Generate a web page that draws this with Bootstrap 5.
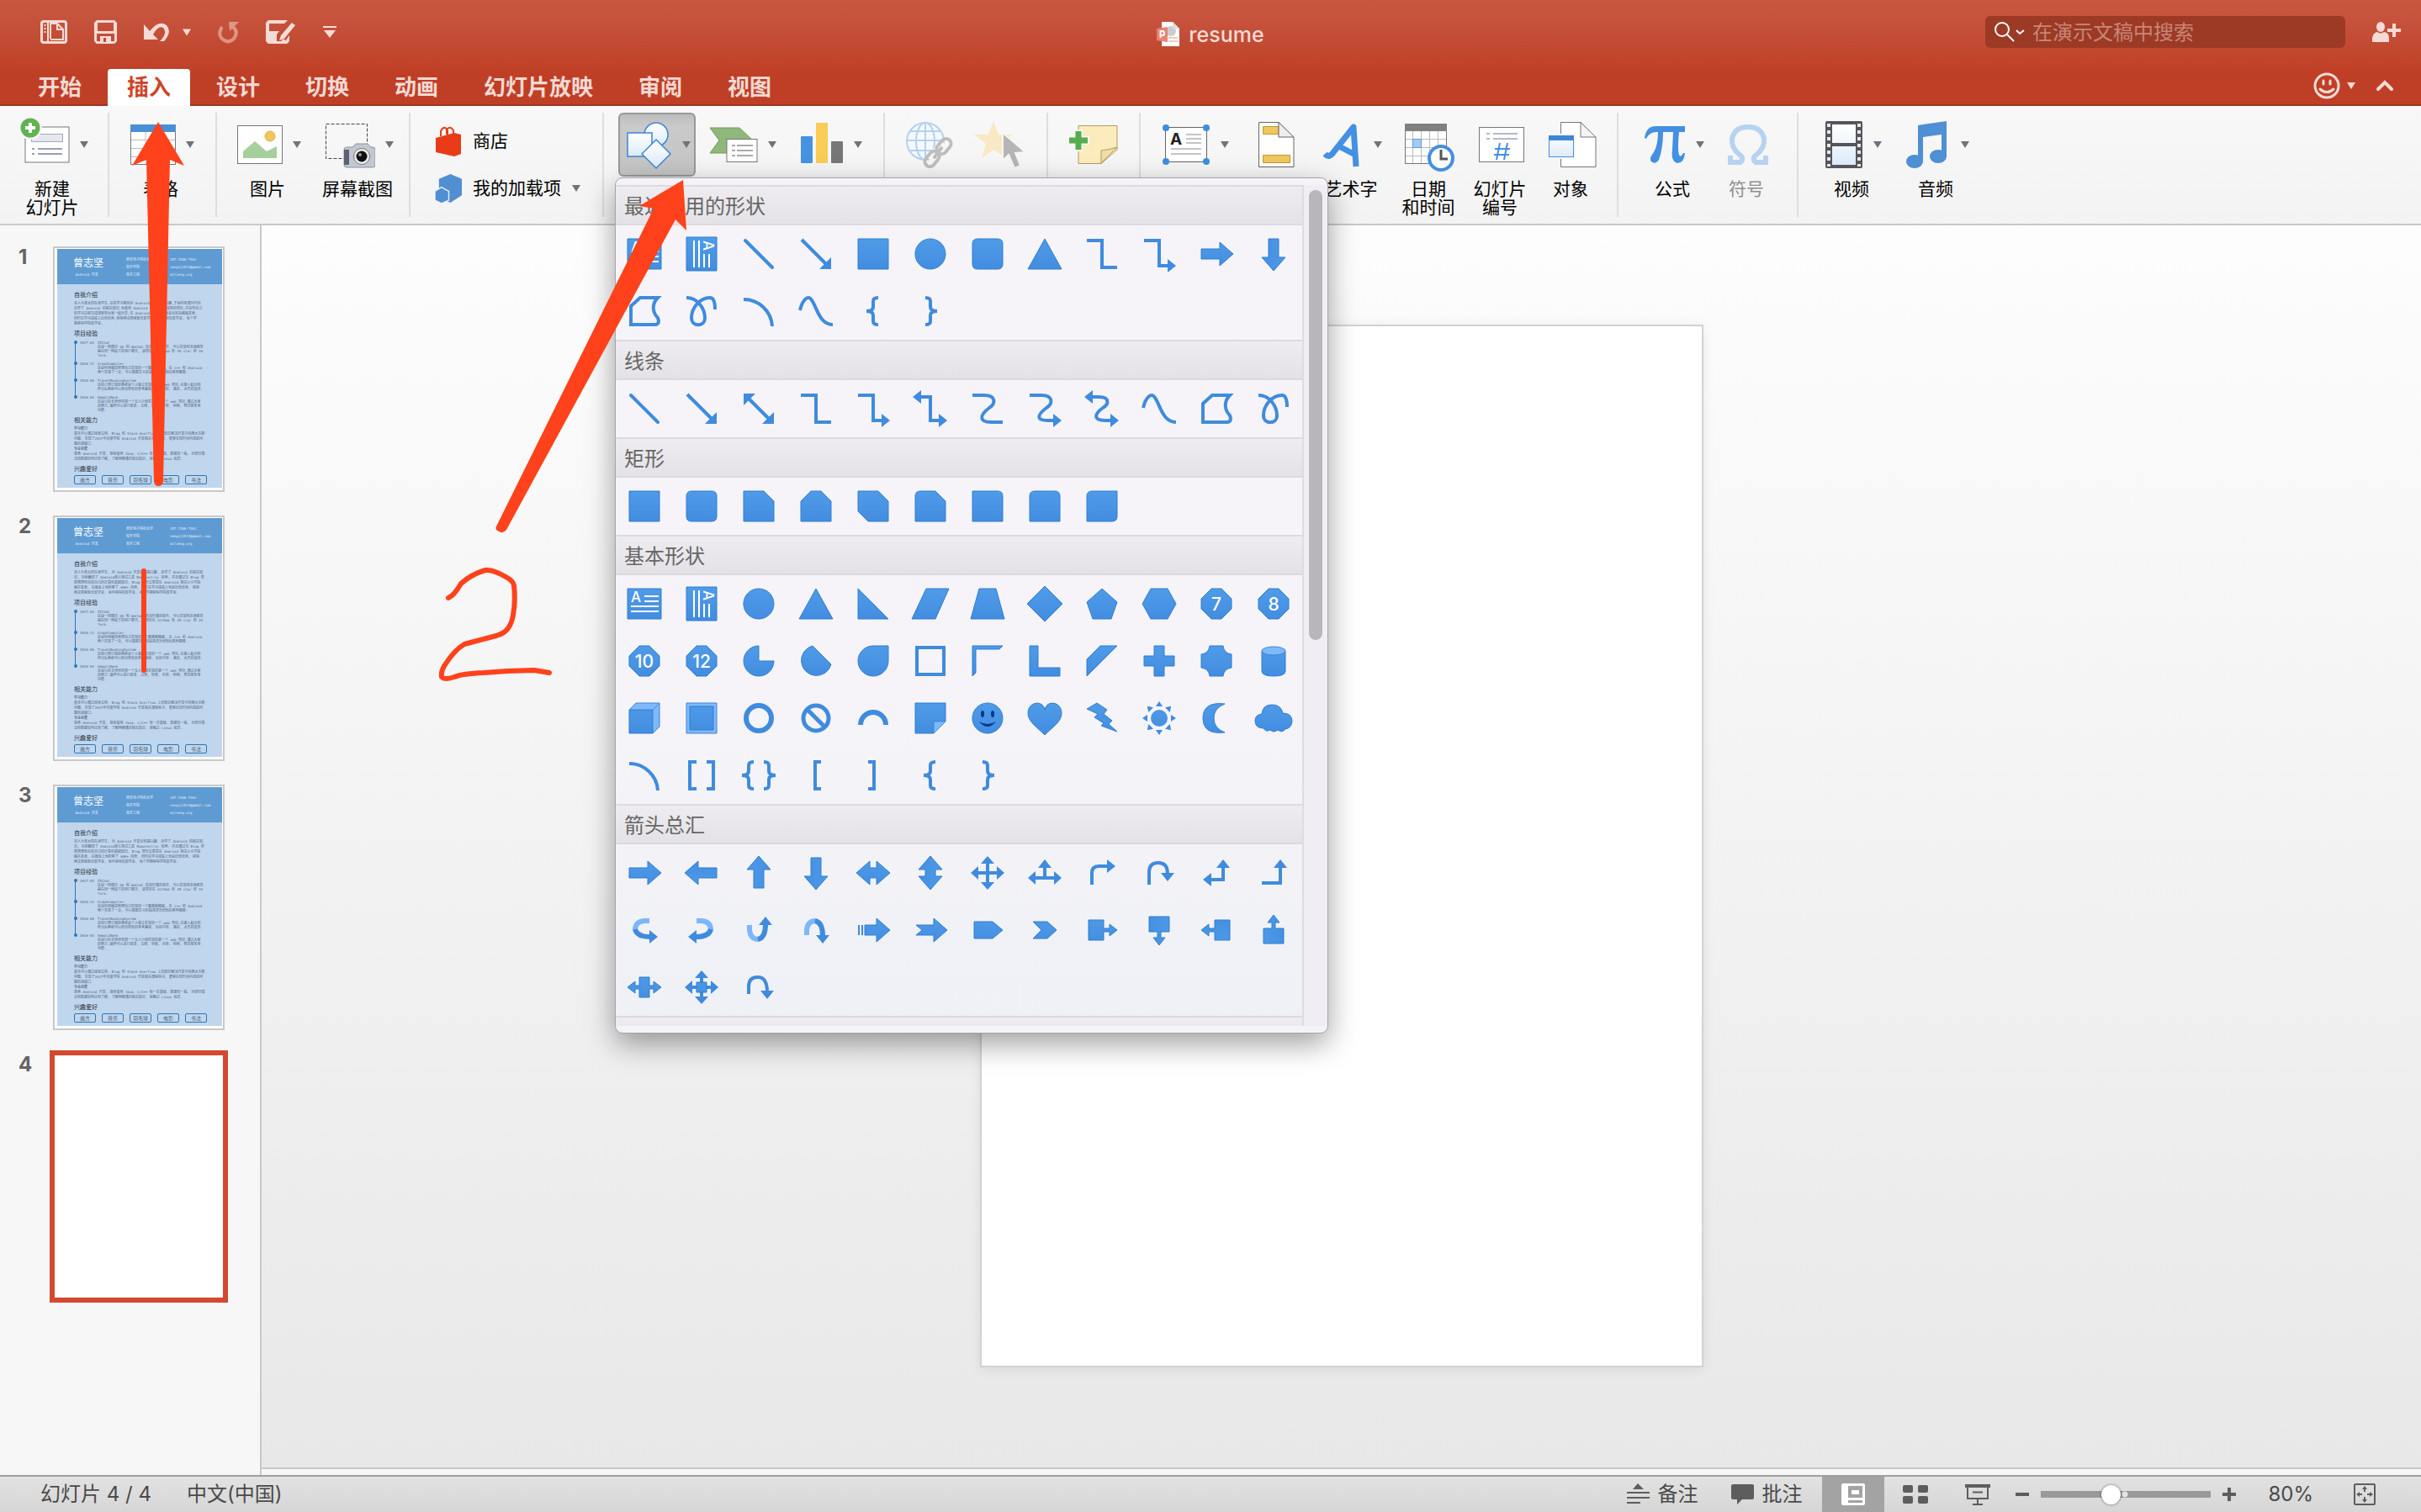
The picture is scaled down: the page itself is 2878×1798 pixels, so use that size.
<!DOCTYPE html>
<html lang="zh-CN">
<head>
<meta charset="utf-8">
<meta name="viewport" content="width=device-width, initial-scale=1">
<title>resume</title>
<link href="https://cdn.jsdelivr.net/npm/bootstrap@5.3.0/dist/css/bootstrap.min.css" rel="stylesheet">
<style>
  body { font-family: Inter, "Noto Sans CJK SC", sans-serif; font-size: 24px; line-height: 1.25; color: #4a4a4a; background: #f7f7f7; }
  svg { display: block; flex: none; }
  button { color: inherit; }
  .plain { background: none; border: 0; padding: 0; }

  /* title bar and tabs */
  .app-head { background: linear-gradient(#c8563d 0, #c5513a 30px, #bf3f26 88px, #bf3f26 100%); box-shadow: inset 0 -2px #9c3521; color: #f5dbd5; }
  .title-row { display: grid; grid-template-columns: 1fr auto 1fr; height: 76px; padding: 0 24px; }
  .doc-title { font-size: 25px; font-weight: 500; line-height: 30px; gap: 10px; padding-top: 6px; }
  .quick { gap: 32px; padding-left: 24px; }
  .search-box { width: 428px; height: 38px; border-radius: 6px; background: #9c3a26; padding-left: 10px; gap: 8px; }
  .search-box input { background: none; border: 0; outline: 0; color: #fff; font-size: 24px; line-height: 30px; padding: 2px 0 0; width: 360px; }
  .search-box input::placeholder { color: #ca8577; opacity: 1; }
  .tab-row { height: 50px; padding: 6px 32px 0 22px; }
  .tab-row .nav { gap: 8px; }
  .tab-link { font-size: 26px; font-weight: 700; line-height: 44px; height: 44px; padding: 0 23px; color: #f3d9d2; text-decoration: none; border-radius: 4px 4px 0 0; }
  .tab-link.active { background: #fff; color: #cf4327; }

  /* ribbon */
  .ribbon { height: 142px; padding-top: 8px; background: linear-gradient(#f8f8f8, #f3f3f3); border-bottom: 2px solid #c9c9c9; }
  .tool-group { height: 124px; gap: 4px; border-right: 2px solid #dedede; }
  .tool-group.last { border: 0; padding-left: 19px; }
  .w-a { width: 130px; } .w-b { width: 128px; } .w-c { width: 230px; padding-left: 6px; } .w-d { width: 230px; padding: 16px 0 16px 29px; } .w-e { width: 334px; padding-left: 17px; }
  .w-f { width: 194px; } .w-g { width: 110px; } .w-h { width: 568px; padding-left: 13px; gap: 3px; } .w-i { width: 214px; padding-right: 4px; }
  .tool { display: flex; flex-direction: column; align-items: center; justify-content: flex-start; font-size: 21px; line-height: 22px; color: #000; padding: 0 12px; min-width: 72px; }
  .tool-face { display: flex; align-items: center; justify-content: center; gap: 12px; height: 76px; margin-bottom: 4px; }
  .tool span { display: block; white-space: nowrap; margin: 0 -8px 0 -12px; }
  .tool.off span { color: #8e8e8e; }
  .tool.pressed { padding: 0; }
  .tool.pressed .tool-face { width: 92px; padding: 0 2px 0 5px; background: linear-gradient(#bdbdbd, #cacaca 20%, #c4c4c4); border: 2px solid #989898; border-radius: 6px; }
  .header-tool { min-width: 82px; }
  .side-tool { font-size: 21px; line-height: 32px; color: #000; gap: 13px; }

  /* shape gallery */
  .gallery { position: absolute; left: -4px; top: 77px; width: 848px; z-index: 5; padding: 8px 0 8px; background: #f5f3f7; border: 1px solid #a4a4a8; border-radius: 9px; box-shadow: 0 12px 34px rgba(0,0,0,.38); }
  .gallery-list { width: 816px; height: 1000px; overflow: hidden; background: linear-gradient(#f6f4f8, #f6f4f8 60%, #eff1f6); }
  .gallery-bar { width: 30px; border-left: 2px solid #dddce0; background: #f0eef4; padding: 6px 0 0 6px; }
  .gallery-thumb { width: 16px; height: 535px; border-radius: 8px; background: #b8b6ba; }
  .shape-head { font-size: 24px; font-weight: 400; line-height: 47px; height: 48px; margin: 0; padding-left: 10px; color: #666; border: solid #dcdade; border-width: 2px 0; background: linear-gradient(#eeecf0, #e4e2e6); }
  .shape-grid { display: grid; grid-template-columns: repeat(12, 68px); }
  .shape-grid button { height: 68px; }
  .num { font: 500 21px Inter, sans-serif; fill: #fff; text-anchor: middle; }

  /* slide panel */
  .panel { width: 311px; flex: none; border-right: 2px solid #c9c9c9; background: #f7f7f7; padding-top: 25px; }
  .slide-item { height: 292px; margin-bottom: 28px; }
  .slide-no { width: 63px; padding-left: 22px; font-size: 24px; font-weight: 700; line-height: 26px; color: #646464; }
  .thumb { width: 204px; height: 292px; border: 2px solid #c8c8c8; background: #fff; padding: 1px 1px 4px 3px; }
  .thumb.current { border-color: #d2492f; outline: 4px solid #d2492f; }
  .cv { width: 196px; height: 284px; background: #bfd6ed; color: #52637a; font: 4px/6px "DejaVu Sans Mono", "Noto Sans CJK SC", monospace; }
  .cv-head { height: 42px; background: #5f9bd3; color: #e4eef8; padding: 8px 0 0 19px; display: grid; grid-template-columns: 63px 52px 1fr; line-height: 9px; white-space: pre; }
  .cv-name { font-size: 12px; line-height: 18px; color: #fff; }
  .cv-main { padding: 8px 18px 0 20px; white-space: pre; }
  .cv-h { font-size: 7px; line-height: 10px; font-weight: 400; color: #27303b; margin-bottom: 2px; }
  .cv-main > p { margin: 0 0 4px; }
  .cv-sub { color: #303c4b; }
  .cv-time { position: relative; margin: 3px 0 4px; line-height: 5px; }
  .cv-time::before { content: ""; position: absolute; left: 1px; top: 2px; height: 66px; width: 1px; background: #2e75b6; }
  .cv-row { display: grid; grid-template-columns: 7px 21px 1fr; margin-bottom: 5px; }
  .cv-row::before { content: ""; width: 4px; height: 4px; border-radius: 50%; background: #2e75b6; }
  .cv-tag { border: 1px solid #2e75b6; border-radius: 2px; width: 26px; height: 11px; font-size: 6px; line-height: 9px; text-align: center; }

  /* canvas */
  .stage { background: linear-gradient(#fdfdfd, #e8e8e8); border-bottom: 2px solid #cacaca; margin-bottom: 7px; }
  .page-sheet { width: 860px; height: 1240px; margin-bottom: 2px; background: #fff; border: 2px solid #d2d2d2; box-shadow: 0 2px 14px rgba(0,0,0,.08); }

  /* status bar */
  .status { height: 44px; border-top: 2px solid #9f9f9f; background: linear-gradient(#e2e2e2, #d6d6d6); line-height: 44px; padding: 0 54px 0 48px; }
  .status-info { gap: 42px; }
  .status-notes { gap: 40px; }
  .status-btn { gap: 9px; }
  .view-btn { width: 74px; height: 42px; }
  .view-btn.active { background: #a3a3a3; }
  .zoom-label { margin: 0 48px 0 38px; }
  .zoom-range { -webkit-appearance: none; appearance: none; width: 202px; height: 24px; background: radial-gradient(circle at 100px 12px, #e4e4e4 3px, transparent 4px), linear-gradient(#999, #999) 0 8px / 100% 8px no-repeat; border-radius: 4px; margin: 0 14px; }
  .zoom-range::-webkit-slider-thumb { -webkit-appearance: none; width: 23px; height: 23px; border-radius: 50%; background: #fff; box-shadow: 0 0 3px rgba(0,0,0,.55); }

  .ink { position: absolute; left: 0; top: 0; z-index: 10; pointer-events: none; }
</style>
<script src="https://cdn.jsdelivr.net/npm/bootstrap@5.3.0/dist/js/bootstrap.bundle.min.js"></script>
</head>
<body class="d-flex flex-column vh-100 overflow-hidden position-relative">

<svg width="0" height="0" class="position-absolute" aria-hidden="true">
  <defs>
    <linearGradient id="gb" gradientUnits="userSpaceOnUse" x1="0" y1="14" x2="0" y2="54"><stop offset="0" stop-color="#509ce8"/><stop offset="1" stop-color="#428ce0"/></linearGradient>
    <linearGradient id="gw" x1="0" y1="0" x2="0" y2="1"><stop offset="0" stop-color="#fff"/><stop offset="1" stop-color="#dcebf9"/></linearGradient>
    <symbol id="caret" viewBox="0 0 10 8"><path d="M0 0H10L5 8Z" fill="currentColor"/></symbol>
  </defs>
</svg>

<header class="app-head">
  <div class="title-row align-items-center">
    <div class="quick d-flex align-items-center">
      <button class="plain" aria-label="模板"><svg width="32" height="28" viewBox="0 0 32 28"><path fill="none" stroke="currentColor" stroke-width="3" d="M4 1.500H28Q30.500 1.500 30.500 4V24Q30.500 26.500 28 26.500H4Q1.500 26.500 1.500 24V4Q1.500 1.500 4 1.500Z"/><path fill="none" stroke="currentColor" stroke-width="2" d="M9 2V26M12 22V4H20L27 11V23H12M20 4V11H27"/><path stroke="currentColor" stroke-width="2" stroke-dasharray="2 2" d="M5.500 5V15"/></svg></button>
      <button class="plain" aria-label="保存"><svg width="27" height="28" viewBox="0 0 27 28"><path fill="currentColor" fill-rule="evenodd" d="M3 0H24L27 3V25L24 28H3L0 25V3ZM4 3V13H23V3ZM3 16V25H7V19H20V25H24V16ZM11 21V26H14V21Z"/></svg></button>
      <div class="d-flex align-items-center gap-3">
        <button class="plain" aria-label="撤消"><svg width="30" height="26" viewBox="0 0 30 26"><path fill="currentColor" d="M0 4V22H17L11 16Q17 5 23 8Q29 14 19 24H24Q34 13 27 5Q18-2 7 12Z"/></svg></button>
        <svg width="10" height="9"><use href="#caret"/></svg>
      </div>
      <button class="plain opacity-50" aria-label="重复"><svg width="25" height="28" viewBox="0 0 25 28"><path fill="none" stroke="currentColor" stroke-width="4" d="M5 8Q0 15 4 21Q11 29 19 22Q25 14 18 8"/><path fill="currentColor" d="M13 2H25L14 13Z"/></svg></button>
      <button class="plain" aria-label="另存为"><svg width="36" height="28" viewBox="0 0 36 28"><path fill="currentColor" fill-rule="evenodd" d="M3 0H26L22 4H4V13H16L13 17V25H18L20 23H23V25L28 18V25L25 28H3L0 25V3Z"/><path fill="currentColor" d="M31 3L35 6L22 22L16 24L18 18Z"/></svg></button>
      <button class="plain" aria-label="自定义"><svg width="16" height="16" viewBox="0 0 16 16"><path fill="currentColor" d="M0 1H16V3H0ZM1 6H15L8 15Z"/></svg></button>
    </div>
    <div class="doc-title d-flex align-items-center">
      <svg width="28" height="30" viewBox="0 0 28 30"><path fill="#fff" d="M6 0H19L27 8V29H6Z"/><circle cx="17" cy="11" r="6" fill="#ccc"/><path fill="#dcdcdc" d="M19 0V8H27Z"/><path stroke="#f0cdb8" stroke-width="2" d="M14 19H25M14 23H25"/><path fill="#e88272" d="M0 8L13 6V24L0 22Z"/><path d="M4.500 19V11H7Q9 11 9 13.500T7 16H5" fill="none" stroke="#fff" stroke-width="2"/></svg>
      <span>resume</span>
    </div>
    <div class="d-flex align-items-center justify-content-end gap-4">
      <label class="search-box d-flex align-items-center me-2">
        <svg width="38" height="26" viewBox="0 0 38 26" fill="none" stroke="#fff" stroke-width="2"><circle cx="10" cy="10" r="8"/><path d="M16 16L24 24M27 11L31 15L36 11"/></svg>
        <input type="text" placeholder="在演示文稿中搜索" aria-label="在演示文稿中搜索">
      </label>
      <button class="plain" aria-label="共享"><svg width="34" height="26" viewBox="0 0 34 26" fill="currentColor"><ellipse cx="10" cy="7" rx="5" ry="6"/><path d="M0 25V20Q1 14 6 13Q10 16 14 13Q20 14 20 20V25ZM18 9H24V3H28V9H34V13H28V19H24V13H18Z"/></svg></button>
    </div>
  </div>
  <div class="tab-row d-flex justify-content-between">
    <nav class="nav">
      <a class="tab-link" href="#">开始</a><a class="tab-link active" href="#" aria-current="page">插入</a><a class="tab-link" href="#">设计</a><a class="tab-link" href="#">切换</a><a class="tab-link" href="#">动画</a><a class="tab-link" href="#">幻灯片放映</a><a class="tab-link" href="#">审阅</a><a class="tab-link" href="#">视图</a>
    </nav>
    <div class="d-flex align-items-center gap-2 pb-1">
      <button class="plain" aria-label="反馈"><svg width="32" height="32" viewBox="0 0 32 32" fill="none" stroke="currentColor" stroke-width="3"><circle cx="16" cy="16" r="14"/><path stroke-linecap="round" d="M12 10V14M20 10V14M8 20Q16 27 24 20"/></svg></button>
      <svg width="10" height="8"><use href="#caret"/></svg>
      <button class="plain ms-3" aria-label="折叠功能区"><svg width="22" height="14" viewBox="0 0 22 14" fill="none" stroke="currentColor" stroke-width="4" stroke-linecap="round"><path d="M3 11L11 3L19 11"/></svg></button>
    </div>
  </div>
</header>

<section class="ribbon d-flex text-secondary position-relative z-1" aria-label="插入">
  <div class="tool-group w-a d-flex justify-content-center">
    <button class="plain tool"><div class="tool-face"><svg width="60" height="76" viewBox="21 134 60 76"><rect x="28" y="151" width="52" height="42" fill="#fff" stroke="#777"/><rect x="35.500" y="159.500" width="37" height="9" fill="#e6e8f0" stroke="#a5a9bb"/><path stroke="#9a9eb8" stroke-width="2" d="M36 177H39M43 177H72M36 183H39M43 183H72"/><circle cx="34" cy="152" r="14" fill="#f7f7f7"/><circle cx="34" cy="152" r="11.500" fill="#62b152"/><path stroke="#fff" stroke-width="4" d="M34 146V158M28 152H40"/></svg><svg class="text-secondary" width="10" height="8"><use href="#caret"/></svg></div><span>新建<br>幻灯片</span></button>
  </div>
  <div class="tool-group w-b d-flex justify-content-center">
    <button class="plain tool"><div class="tool-face"><svg width="54" height="76" viewBox="157 134 54 76"><rect x="157.500" y="148.500" width="53" height="47" fill="#fff" stroke="#777"/><path stroke="#bbb" d="M158 166.500H210M158 176.500H210M158 186.500H210M175 157V195M193 157V195"/><path fill="#4a8fd6" d="M157 148H211V157H157Z"/></svg><svg class="text-secondary" width="10" height="8"><use href="#caret"/></svg></div><span>表格</span></button>
  </div>
  <div class="tool-group w-c d-flex justify-content-center">
    <button class="plain tool"><div class="tool-face"><svg width="54" height="76" viewBox="285 134 54 76"><rect x="285.500" y="149.500" width="53" height="45" fill="#fff" stroke="#777"/><circle cx="324" cy="162" r="6" fill="#f0c75a" stroke="#dcae3a"/><path fill="#a6cf9d" d="M292 188V180L306 168L320 180L332 174V188Z"/></svg><svg class="text-secondary" width="10" height="8"><use href="#caret"/></svg></div><span>图片</span></button>
    <button class="plain tool"><div class="tool-face"><svg width="60" height="76" viewBox="384 134 60 76"><rect x="385.500" y="147.500" width="49" height="41" fill="none" stroke="#444" stroke-dasharray="4 2"/><path fill="#c3c7d1" stroke="#8c92a1" d="M410 175H417L421 171H435L439 175H441Q444 175 444 178V196Q444 199 441 199H410Q407 199 407 196V178Q407 175 410 175Z"/><path fill="#5d6270" d="M407 178H413V196H407Z"/><circle cx="428" cy="186" r="9.500" fill="#eee" stroke="#777"/><circle cx="428" cy="186" r="6.500" fill="#111"/><circle cx="426" cy="184" r="2" fill="#999"/></svg><svg class="text-secondary" width="10" height="8"><use href="#caret"/></svg></div><span>屏幕截图</span></button>
  </div>
  <div class="tool-group w-d d-flex flex-column align-items-start justify-content-between">
    <button class="plain side-tool d-flex align-items-center"><svg width="32" height="36" viewBox="518 148 32 36"><path fill="none" stroke="#e83c1b" stroke-width="2" d="M525 160V154Q529 146 533 153V159M532 158V152Q536 147 540 153V158"/><path fill="#ea3b19" d="M519 162L541 156L549 158V181L541 184L519 179Z"/></svg>商店</button>
    <button class="plain side-tool d-flex align-items-center"><svg width="32" height="36" viewBox="517 208 33 37"><path fill="#4f8fd2" d="M522 215L536 209L550 215V235L536 244L522 238Z"/><path fill="#4f8fd2" stroke="#e8f0f8" stroke-width="1.500" d="M517 230L525 225L534 230V241L525 245L517 241Z"/></svg>我的加载项<svg class="text-secondary" width="10" height="8"><use href="#caret"/></svg></button>
  </div>
  <div class="tool-group w-e d-flex">
    <div class="position-relative">
      <button class="plain tool pressed" aria-label="形状" aria-expanded="true"><div class="tool-face"><svg width="54" height="76" viewBox="746 134 54 76" fill="url(#gw)" stroke="#3a86d6" stroke-width="1.500"><circle cx="781" cy="160" r="14"/><rect x="747" y="158" width="29" height="28"/><path d="M781 166L798 183L781 200L764 183Z"/></svg><svg class="text-secondary" width="10" height="8"><use href="#caret"/></svg></div></button>
      <div class="gallery d-flex" role="menu" aria-label="形状库">
        <div class="gallery-list" id="galleryList"></div>
        <div class="gallery-bar"><div class="gallery-thumb"></div></div>
      </div>
    </div>
    <button class="plain tool" aria-label="SmartArt"><div class="tool-face"><svg width="58" height="76" viewBox="841 134 58 76"><path fill="#8fb87a" stroke="#709c5b" d="M842 152H877L893 167L878 182H842L853 167Z"/><rect x="862" y="165.500" width="36" height="27" fill="#fff" stroke="#777"/><path stroke="#aaa" stroke-width="2" d="M868 173H872M874 173H893M868 179H872M874 179H893M868 185H872M874 185H893"/></svg><svg class="text-secondary" width="10" height="8"><use href="#caret"/></svg></div></button>
    <button class="plain tool" aria-label="图表"><div class="tool-face"><svg width="52" height="76" viewBox="951 134 52 76"><rect x="952" y="162" width="14" height="32" rx="1" fill="#4793e2"/><rect x="970" y="146" width="14" height="48" rx="1" fill="#f8cc55"/><rect x="988" y="168" width="14" height="26" rx="1" fill="#777"/></svg><svg class="text-secondary" width="10" height="8"><use href="#caret"/></svg></div></button>
  </div>
  <div class="tool-group w-f d-flex justify-content-center gap-0">
    <button class="plain tool" disabled aria-label="超链接"><div class="tool-face"><svg width="57" height="76" viewBox="1079 134 57 76" fill="none"><g stroke="#b4d1f0" stroke-width="2"><circle cx="1102" cy="168" r="22" fill="#f4f9fe"/><ellipse cx="1102" cy="168" rx="11" ry="22"/><path d="M1102 146V190M1080 167H1124M1084 156H1120M1084 179H1120"/></g><path stroke="#f6f6f6" stroke-width="16" d="M1126 172L1110 192"/><g stroke="#bdbdbd" stroke-width="4" stroke-linecap="round"><rect x="1118" y="164" width="12" height="20" rx="6" transform="rotate(40 1124 174)"/><rect x="1104" y="179" width="12" height="20" rx="6" transform="rotate(40 1110 189)"/><path d="M1121 176L1113 187"/></g></svg></div></button>
    <button class="plain tool" disabled aria-label="动作"><div class="tool-face"><svg width="62" height="76" viewBox="1158 134 62 76"><path fill="#f8e9c4" d="M1181 144L1187 160H1204L1190 171L1196 188L1181 178L1167 188L1172 171L1158 160H1175Z"/><path fill="#b5b5b5" stroke="#f5f5f5" stroke-width="2" d="M1192 158L1219 181L1207 182L1213 197L1206 200L1199 184L1192 191Z"/></svg></div></button>
  </div>
  <div class="tool-group w-g d-flex justify-content-center">
    <button class="plain tool" aria-label="批注"><div class="tool-face"><svg width="58" height="76" viewBox="1270 134 58 76"><path fill="#fbebbd" stroke="#b09c66" d="M1281 149.500H1327V178L1308 194.500H1281Z"/><path fill="#f2dda5" stroke="#b09c66" d="M1308 194V179Q1318 178 1327 175Z"/><path stroke="#f7f7f7" stroke-width="10" d="M1281 154V180M1269 167H1294"/><path stroke="#57ad4f" stroke-width="7" d="M1281 156V178M1270 167H1292"/></svg></div></button>
  </div>
  <div class="tool-group w-h d-flex">
    <button class="plain tool" aria-label="文本框"><div class="tool-face"><svg width="58" height="76" viewBox="1381 134 58 76"><rect x="1385.500" y="151.500" width="49" height="41" fill="#fff" stroke="#666"/><path stroke="#c4c4c4" stroke-width="2" d="M1410 160H1428M1410 165H1428M1410 170H1428M1392 177H1428M1392 183H1428"/><text x="1391" y="172" font-size="19" font-weight="700" fill="#222">A</text><g fill="#3f8ee0"><circle cx="1386" cy="152" r="4"/><circle cx="1434" cy="152" r="4"/><circle cx="1386" cy="192" r="4"/><circle cx="1434" cy="192" r="4"/></g></svg><svg class="text-secondary" width="10" height="8"><use href="#caret"/></svg></div></button>
    <button class="plain tool header-tool" aria-label="页眉和页脚"><div class="tool-face"><svg width="44" height="76" viewBox="1492 134 44 76"><path fill="#fff" stroke="#666" d="M1493.500 145.500H1517L1535 163V198.500H1493.500Z"/><path fill="#f0c75c" stroke="#c49a2f" d="M1498.500 150.500H1517V159.500H1498.500ZM1498.500 184.500H1530.500V193.500H1498.500Z"/><path fill="#eee" stroke="#666" d="M1517 145.500V163H1535Z"/></svg></div></button>
    <button class="plain tool"><div class="tool-face"><svg width="44" height="76" viewBox="1575 134 44 76"><path fill="none" stroke="#4490e2" stroke-width="7" stroke-linejoin="round" d="M1577 183Q1582 189 1588 180L1611 151L1614 198M1592 173L1613 184"/></svg><svg class="text-secondary ms-1" width="10" height="8"><use href="#caret"/></svg></div><span>艺术字</span></button>
    <button class="plain tool"><div class="tool-face"><svg width="60" height="76" viewBox="1673 134 60 76"><rect x="1673.500" y="147.500" width="49" height="47" fill="#fff" stroke="#777"/><path stroke="#bbb" d="M1674 165.500H1722M1674 175.500H1722M1674 185.500H1722M1682.500 156V194M1692.500 156V194M1702.500 156V194M1712.500 156V194"/><path fill="#808080" d="M1673 147H1723V156H1673Z"/><path fill="#a5cbf4" stroke="#5a9ce0" d="M1682.500 165.500H1692.500V175.500H1682.500Z"/><circle cx="1716" cy="188" r="14" fill="#fff" stroke="#4390e2" stroke-width="4"/><path fill="none" stroke="#555" stroke-width="3" d="M1716 178V189H1724"/></svg></div><span>日期<br>和时间</span></button>
    <button class="plain tool"><div class="tool-face"><svg width="56" height="76" viewBox="1756 134 56 76"><rect x="1757.500" y="151.500" width="53" height="41" fill="#fff" stroke="#777"/><path stroke="#b3b9c8" stroke-width="2" d="M1766 159H1770M1774 159H1803M1766 165H1770M1774 165H1803"/><path stroke="#4490e2" stroke-width="2" d="M1782 170L1778 190M1791 170L1787 190M1776 177H1794M1775 184H1793"/></svg></div><span>幻灯片<br>编号</span></button>
    <button class="plain tool"><div class="tool-face"><svg width="58" height="76" viewBox="1838 134 58 76"><path fill="#fff" stroke="#777" d="M1853.500 145.500H1877L1895 163V198.500H1853.500Z"/><path fill="#f4f4f4" stroke="#777" d="M1877 145.500V163H1895Z"/><rect x="1837" y="159" width="34" height="30" fill="#f7f7f7"/><rect x="1839.500" y="161.500" width="29" height="25" fill="url(#gw)" stroke="#4490e2"/><path fill="#3c86d8" d="M1839 161H1869V167H1839Z"/></svg></div><span>对象</span></button>
  </div>
  <div class="tool-group w-i d-flex justify-content-center">
    <button class="plain tool"><div class="tool-face"><svg width="50" height="76" viewBox="1953 134 50 76"><path fill="#4390e2" d="M1954 164Q1956 150 1967 150H2002V157H1995Q1993 178 1995 184Q1997 188 2000 182H2002Q2001 194 1993 194Q1985 192 1987 178L1988 157H1976Q1976 176 1971 190Q1966 197 1961 191Q1960 187 1965 181Q1970 172 1970 157Q1960 156 1956 165Z"/></svg><svg class="text-secondary" width="10" height="8"><use href="#caret"/></svg></div><span>公式</span></button>
    <button class="plain tool off" disabled><div class="tool-face"><svg width="48" height="76" viewBox="2058 134 48 76"><path fill="none" stroke="#b7d3f1" stroke-width="6" d="M2061 185V193H2073Q2078 188 2072 184Q2062 176 2063 165Q2066 151 2082 151Q2098 151 2101 165Q2102 176 2092 184Q2086 188 2091 193H2103V185"/></svg></div><span>符号</span></button>
  </div>
  <div class="tool-group last d-flex">
    <button class="plain tool"><div class="tool-face"><svg width="46" height="76" viewBox="2169 134 46 76"><rect x="2170" y="144" width="44" height="56" rx="2" fill="#54565c"/><path fill="url(#gw)" d="M2178 148H2206V170H2178ZM2178 174H2206V196H2178Z"/><path stroke="#e8e8e8" stroke-width="4" stroke-dasharray="4 4" d="M2174 147V198M2210 147V198"/></svg><svg class="text-secondary" width="10" height="8"><use href="#caret"/></svg></div><span>视频</span></button>
    <button class="plain tool"><div class="tool-face"><svg width="50" height="76" viewBox="2267 134 50 76" fill="#4f8fd3"><path d="M2282 149L2316 144V186H2310V160L2288 163V192H2282Z"/><ellipse cx="2278" cy="192" rx="10" ry="8"/><ellipse cx="2306" cy="186" rx="10" ry="8"/></svg><svg class="text-secondary ms-1" width="10" height="8"><use href="#caret"/></svg></div><span>音频</span></button>
  </div>
</section>

<main class="d-flex flex-grow-1">
  <aside class="panel" id="panel" aria-label="幻灯片"></aside>
  <div class="d-flex flex-column flex-grow-1">
    <div class="stage d-flex flex-grow-1 align-items-center justify-content-center"><div class="page-sheet"></div></div>
  </div>
</main>

<footer class="status d-flex justify-content-between align-items-center">
  <div class="status-info d-flex"><span>幻灯片 4 / 4</span><span>中文(中国)</span></div>
  <div class="d-flex align-items-center">
    <div class="status-notes d-flex me-4">
      <button class="plain status-btn d-flex align-items-center"><svg width="27" height="26" viewBox="0 0 27 26"><path fill="#5d5d5d" d="M13 0L20 7H7ZM0 10H27V12H0ZM0 16H27V18H0ZM0 22H16V24H0Z"/></svg>备注</button>
      <button class="plain status-btn d-flex align-items-center"><svg width="27" height="24" viewBox="0 0 27 24"><path fill="#5d5d5d" d="M2 0H25Q27 0 27 2V16Q27 18 25 18H13L7 24V18H2Q0 18 0 16V2Q0 0 2 0Z"/></svg>批注</button>
    </div>
    <button class="plain view-btn active d-flex align-items-center justify-content-center" aria-label="普通视图"><svg width="28" height="26" viewBox="0 0 28 26"><path fill="#fff" fill-rule="evenodd" d="M2 0H26Q28 0 28 2V24Q28 26 26 26H2Q0 26 0 24V2Q0 0 2 0ZM8 3V17H25V3ZM8 20V23H25V20Z"/><path fill="#fff" d="M12 8H21V13H12Z"/></svg></button>
    <button class="plain view-btn d-flex align-items-center justify-content-center" aria-label="幻灯片浏览"><svg width="30" height="22" viewBox="0 0 30 22" fill="#5d5d5d"><rect width="12" height="9" rx="2"/><rect x="18" width="12" height="9" rx="2"/><rect y="13" width="12" height="9" rx="2"/><rect x="18" y="13" width="12" height="9" rx="2"/></svg></button>
    <button class="plain view-btn d-flex align-items-center justify-content-center" aria-label="幻灯片放映"><svg width="30" height="25" viewBox="0 0 30 25"><path fill="none" stroke="#5d5d5d" stroke-width="2" d="M3 3V17H27V3M9 9.500H21M15 17V23M9 24H21"/><path fill="#5d5d5d" d="M0 0H30V4H0Z"/></svg></button>
    <button class="plain ms-2" aria-label="缩小"><svg width="16" height="16"><path fill="#5d5d5d" d="M0 6H16V10H0Z"/></svg></button>
    <input class="zoom-range" type="range" min="0" max="100" value="40" aria-label="缩放">
    <button class="plain" aria-label="放大"><svg width="16" height="16"><path fill="#5d5d5d" d="M0 6H6V0H10V6H16V10H10V16H6V10H0Z"/></svg></button>
    <span class="zoom-label">80%</span>
    <button class="plain" aria-label="适应窗口"><svg width="26" height="26" viewBox="0 0 26 26"><rect x="1" y="1" width="24" height="24" rx="1" fill="none" stroke="#5d5d5d" stroke-width="2"/><path stroke="#5d5d5d" stroke-width="2" d="M13 5V10M13 16V21M5 13H10M16 13H21"/><path fill="#5d5d5d" d="M13 3L16 7H10ZM13 23L10 19H16ZM3 13L7 10V16ZM23 13L19 16V10Z"/></svg></button>
  </div>
</footer>

<svg class="ink" width="860" height="840" viewBox="0 0 860 840" aria-hidden="true">
  <g fill="#ff421b">
    <path d="M188 145L157 197L174 190L183 573Q184 578 188 578Q193 578 194 573L202 190L219 197Z"/>
    <path d="M812 214L760 245L777 248L590 626Q588 630 593 632Q598 635 602 630L803 261L816 274Z"/>
  </g>
  <g fill="none" stroke="#ff421b" stroke-width="6" stroke-linecap="round" stroke-linejoin="round">
    <path d="M171 679V797"/>
    <path d="M533 711Q540 708 548 694Q560 683 577 678Q587 677 603 687Q610 691 611 696Q613 716 610 731Q609 740 604 747Q600 753 590 756L552 766Q540 773 528 792Q524 799 525 805Q529 809 540 805Q550 801 575 800L603 798L635 797L653 800"/>
  </g>
</svg>

<script>
  // Shape glyphs, each drawn in a 68 x 68 cell
  const fill = d => `<path d="${d}" fill="url(#gb)" stroke="#2f7fd2"/>`;
  const light = d => `<path d="${d}" fill="#80b9fb" stroke="#3a86d8"/>`;
  const line = (d, w = 4, c = '#3f8bde') => `<path d="${d}" fill="none" stroke="${c}" stroke-width="${w}"/>`;
  const tip = d => `<path d="${d}" fill="#3f8bde"/>`;
  const turn = (a, s) => `<g transform="rotate(${a} 34 34)">${s}</g>`;
  const flip = s => `<g transform="translate(68 0) scale(-1 1)">${s}</g>`;
  const swap = s => `<g transform="matrix(0 1 1 0 0 0)">${s}</g>`;
  const white = d => `<path d="${d}" stroke="#fff" stroke-width="2"/>`;
  const oct = 'M28 16H40L52 28V40L40 52H28L16 40V28Z';
  const num = n => fill(oct) + `<text class="num" x="34" y="42">${n}</text>`;
  const disc = 'M34 16A18 18 0 1 1 33.900 16Z';
  const S = {
    text: fill('M14 16H54V52H14Z') + '<text x="18" y="32" font-size="17" font-weight="500" fill="#fff">A</text>' + white('M34 25H51M34 31H51M18 37H51M18 43H51'),
    vtext: fill('M16 14H52V54H16Z') + '<text transform="translate(36 18) rotate(90)" font-size="17" font-weight="500" fill="#fff">A</text>' + white('M25 18V50M31 18V50M37 34V50M43 34V50'),
    line: `<path d="M18 18L50 50" stroke="#3f8bde" stroke-width="4" stroke-linecap="round"/>`,
    arrow: line('M17 17L46 46') + tip('M52 52V38L38 52Z'),
    darrow: line('M22 22L46 46') + tip('M52 52V38L38 52ZM16 16V30L30 16Z'),
    rect: fill('M16 16H52V52H16Z'), oval: fill(disc),
    round: fill('M22 16H46Q52 16 52 22V46Q52 52 46 52H22Q16 52 16 46V22Q16 16 22 16Z'),
    tri: fill('M34 16L54 52H14Z'),
    elbow: line('M16 18H34V50H52'),
    elbowA: line('M16 18H34V48H45') + tip('M44 40L54 48L44 56Z'),
    elbowD: line('M22 20H34V48H45') + tip('M44 40L54 48L44 56ZM23 12L13 20L23 28Z'),
    curve: line('M16 18H30C44 18 44 28 36 33C24 42 24 50 38 50H52'),
    curveA: line('M16 18H30C44 18 44 28 36 33C24 42 24 48 38 48H45') + tip('M44 40L54 48L44 56Z'),
    curveD: line('M22 20H30C44 20 42 29 35 33C24 41 24 48 38 48H45') + tip('M44 40L54 48L44 56ZM23 12L13 20L23 28Z'),
    right: fill('M16 28H38V20L54 34L38 48V40H16Z'),
    free: line('M18 50V28L29 18H50C42 26 44 36 50 42Q53 50 46 50Z'),
    scrib: line('M16 18C30 18 38 32 38 42C38 53 22 53 22 42C22 30 32 18 44 18Q50 18 50 32'),
    wave: line('M15 33C18 20 25 14 29 21C35 29 38 50 54 50'),
    arc: line('M16 20A34 34 0 0 1 50 52'),
    lbrace: line('M40 18Q34 18 34 22V29Q34 34 26 34Q34 34 34 39V46Q34 50 40 50'),
    lbrack: line('M40 18H33V50H40'),
    braces: line('M28 18Q22 18 22 22V29Q22 34 14 34Q22 34 22 39V46Q22 50 28 50M40 18Q46 18 46 22V29Q46 34 54 34Q46 34 46 39V46Q46 50 40 50'),
    bracks: line('M28 18H20V50H28M40 18H48V50H40'),
    quad: line('M34 20V48M20 34H48') + tip('M14 34L23 26V42ZM54 34L45 42V26ZM34 14L42 23H26ZM34 54L26 45H42Z'),
    lr: fill('M14 34L30 20V28H38V20L54 34L38 48V40H30V48Z'),
    uturn: line('M22 48V33Q22 22 33 22Q44 22 44 35') + tip('M36 34H52L44 44Z'),
    call: fill('M18 22H36V32H43V27L52 34L43 41V36H36V46H18Z'),
    curl: line('M40 23H34Q23 24 23 34', 6, '#7db7fa') + line('M23 33Q25 42 41 42', 6) + tip('M40 34L50 42L40 50Z')
  };
  const down = turn(90, S.right), rbrace = flip(S.lbrace);
  const sections = [
    ['最近使用的形状', [S.text, S.vtext, S.line, S.arrow, S.rect, S.oval, S.round, S.tri, S.elbow, S.elbowA, S.right, down, S.free, S.scrib, S.arc, S.wave, S.lbrace, rbrace]],
    ['线条', [S.line, S.arrow, S.darrow, S.elbow, S.elbowA, S.elbowD, S.curve, S.curveA, S.curveD, S.wave, S.free, S.scrib]],
    ['矩形', [S.rect, S.round, fill('M16 16H40L52 28V52H16Z'), fill('M28 16H40L52 28V52H16V28Z'), fill('M16 16H40L52 28V52H28L16 40Z'), fill('M22 16H40L52 28V52H16V22Q16 16 22 16Z'), fill('M16 16H46Q52 16 52 22V52H16Z'), fill('M22 16H46Q52 16 52 22V52H16V22Q16 16 22 16Z'), fill('M22 16H52V46Q52 52 46 52H16V22Q16 16 22 16Z')]],
    ['基本形状', [S.text, S.vtext, S.oval, S.tri, fill('M16 16V52H52Z'), fill('M29 16H56L40 52H12Z'), fill('M24 16H44L54 52H14Z'), fill('M34 13L55 34L34 55L13 34Z'), fill('M34 16L52 32L45 52H23L16 32Z'), fill('M24 16H44L54 34L44 52H24L14 34Z'), num(7), num(8),
      num(10), num(12), fill('M34 16A18 18 0 1 0 52 34H34Z'), fill('M30 16A18 18 0 1 0 52 38Z'), fill('M34 16H52V34A18 18 0 1 1 34 16Z'), line('M18 18H50V50H18Z'), fill('M16 16H52L48 20H20V48L16 52Z'), fill('M16 16H26V42H52V52H16Z'), fill('M32 16H52L16 52V32Z'), fill('M28 16H40V28H52V40H40V52H28V40H16V28H28Z'), fill('M26 16H42Q43 25 52 26V42Q43 43 42 52H26Q25 43 16 42V26Q25 25 26 16Z'), fill('M20 22V46Q20 52 34 52Q48 52 48 46V22Z') + '<ellipse cx="34" cy="22" rx="14" ry="5" fill="#80b9fb" stroke="#3a86d8"/>',
      fill('M16 24H44V52H16Z') + light('M16 24L24 16H52L44 24Z') + light('M44 24L52 16V44L44 52Z'), light('M16 16H52V52H16Z') + fill('M20 20H48V48H20Z'), '<circle cx="34" cy="34" r="15" fill="none" stroke="#3f8bde" stroke-width="6"/>', '<circle cx="34" cy="34" r="15" fill="none" stroke="#3f8bde" stroke-width="5"/>' + line('M23 23L45 45', 5), line('M19 42A15 15 0 0 1 49 42', 6), fill('M16 16H52V38L38 52H16Z') + light('M38 38H52L38 52Z'), fill(disc) + '<g fill="#053a8c"><ellipse cx="28" cy="29" rx="2" ry="4"/><ellipse cx="40" cy="29" rx="2" ry="4"/><path d="M24 38Q34 44 44 38Q34 50 24 38Z"/></g>', fill('M34 24C36 12 54 14 54 28C54 38 44 44 34 54C24 44 14 38 14 28C14 14 32 12 34 24Z'), fill('M28 16L40 24L36 29L46 37L42 41L52 50L33 43L36 40L25 33L29 29L16 23Z'),
      '<circle cx="34" cy="34" r="10" fill="url(#gb)"/>' + [0, 45, 90, 135, 180, 225, 270, 315].map(a => turn(a, tip('M34 14L38 20H30Z'))).join(''), fill('M44 17Q31 22 31 34Q31 46 44 51Q18 54 18 34Q18 14 44 17Z'), fill('M22 46Q12 46 12 37Q12 30 20 29Q21 18 32 18Q43 18 45 28Q56 28 56 38Q55 46 48 47Q44 52 39 48Q34 52 30 48Q25 51 22 46Z'),
      S.arc, S.bracks, S.braces, S.lbrack, flip(S.lbrack), S.lbrace, rbrace]],
    ['箭头总汇', [S.right, turn(180, S.right), turn(-90, S.right), down, S.lr, turn(90, S.lr), S.quad, line('M34 26V40M20 40H48') + tip('M34 18L42 28H26ZM14 40L23 32V48ZM54 40L45 48V32Z'), line('M22 48V34Q22 26 30 26H41') + tip('M40 18L50 26L40 34Z'), S.uturn, line('M27 42H42V26') + tip('M28 34L18 42L28 50ZM34 28L42 18L50 28Z'), line('M20 46H42V26') + tip('M34 28L42 18L50 28Z'),
      S.curl, flip(S.curl), turn(-90, S.curl), swap(S.curl), fill('M24 28H38V20L54 34L38 48V40H24Z') + line('M17 28V40M21 28V40', 2), fill('M17 28H38V20L54 34L38 48V40H17L24 34Z'), fill('M18 24H40L52 34L40 44H18Z'), fill('M20 24H37L48 34L37 44H20L30 34Z'), S.call, turn(90, S.call), turn(180, S.call), turn(-90, S.call),
      fill('M28 22H40V32H45V27L54 34L45 41V36H40V46H28V36H23V41L14 34L23 27V32H28Z'), S.quad + fill('M28 28H40V40H28Z'), line('M22 42V33Q22 22 33 22Q44 22 44 40') + tip('M36 38H52L44 48Z')]]
  ];
  document.getElementById('galleryList').innerHTML = sections.map(([title, shapes]) =>
    `<h2 class="shape-head">${title}</h2><div class="shape-grid">` +
    shapes.map(s => `<button class="plain" role="menuitem"><svg width="68" height="68" viewBox="0 0 68 68">${s}</svg></button>`).join('') + '</div>').join('') + '<div class="shape-head"></div>';

  // Slide thumbnails
  const intro = ['本人为准大四在读学生,在校学习期间对 Android 开发很感兴趣,于是利用课外时间\n自学了 Android 的相关知识,也使用 Android 完成了几个成型的项目,并且将自己\n的学习过程写成博客和大家一起分享,在 Android 开发者和掘金社区投稿被发表.\n同时在学习成绩上比较优秀,获得两次国家励志奖学金,每年获得校奖学金, 每个学\n期获得学院奖学金.',
    '本人为准大四在读学生, 对 Android 开发比较感兴趣, 自学了 Android 的相关知\n识, 目前翻译了 Android单元测试工具 Robolectric 官网, 并且通过写 Blog 重\n新梳理和总结自己的计算机基础知识, Blog 部分文章曾在 Android 相关公众号投\n稿并发表, 在掘金上也积累了 600+ 的粉, 同时在学习成绩上也是比较优秀, 获得\n两次国家励志奖学金, 每年获得校奖学金, 每个学期获得学院奖学金.'];
  const jobs = [
    ['2017-03', 'ZIChat\n这是一款模仿 QQ 和 WeChat 的及时通讯软件, 可以实现和本地服务\n器在同一网段下的用户聊天, 该项目在 GitHub 有 45 star 和 19\nfork.'],
    ['2016-11', 'GraphCompiler\n这是利用编译原理自己实现的一个图像解释器, 在 C++ 和 Android\n两个实现了一次, 可以根据定义的描述语言绘制出各种图像.'],
    ['2016-06', 'TravelBookingSystem\n这旅行预订规划系统是个人独立实现的一个 web 项目,在输入起点和\n终点后系统可以给出所有的参考路线, 包括中转, 酒店, 大巴的选择.'],
    ['2016-04', 'SmaqliBank\n这是以队长身份带领一个五人小组实现的第一个 web 项目,通过大家\n的努力,最终可以进行登录, 注册, 转账, 存款, 购物, 预定服务等\n功能.']];
  const cv = n => `<div class="cv"><div class="cv-head"><div><div class="cv-name">曾志坚</div> Android 开发</div><div>西安电子科技大学\n软件学院\n软件工程</div><div>157-7200-7361\nzengzj1514@gmail.com\nditzeng.org</div></div>` +
    `<div class="cv-main"><div class="cv-h">自我介绍</div><p>${intro[n]}</p><div class="cv-h">项目经验</div><div class="cv-time">` +
    jobs.map(([d, t]) => `<div class="cv-row"><span>${d}</span><span>${t}</span></div>`).join('') +
    `</div><div class="cv-h">相关能力</div><p><span class="cv-sub">学习能力</span>\n基本可以通过阅读文档, Blog 和 Stack Overflow 上的知识解决开发中的绝大多数\n问题, 实现了2017年百度学院 Android 开发相关课程练习, 能够在短时间内找到问\n题的突破口.\n<span class="cv-sub">专业技能</span>\n熟悉 Android 开发, 熟练使用 Java, C/C++ 有一定基础, 数据库一般, 对部分算\n法和数据结构比较了解, 了解网络通讯相关知识, 接触过 Linux 底层.</p>` +
    `<div class="cv-h">兴趣爱好</div><div class="d-flex justify-content-between">${['魔方', '音乐', '羽毛球', '电影', '书法'].map(t => `<div class="cv-tag">${t}</div>`).join('')}</div></div></div>`;
  document.getElementById('panel').innerHTML = [0, 1, 1, null].map((n, i) =>
    `<div class="slide-item d-flex"><div class="slide-no">${i + 1}</div><div class="thumb overflow-hidden${n === null ? ' current' : ''}">${n === null ? '' : cv(n)}</div></div>`).join('');
</script>
</body>
</html>
